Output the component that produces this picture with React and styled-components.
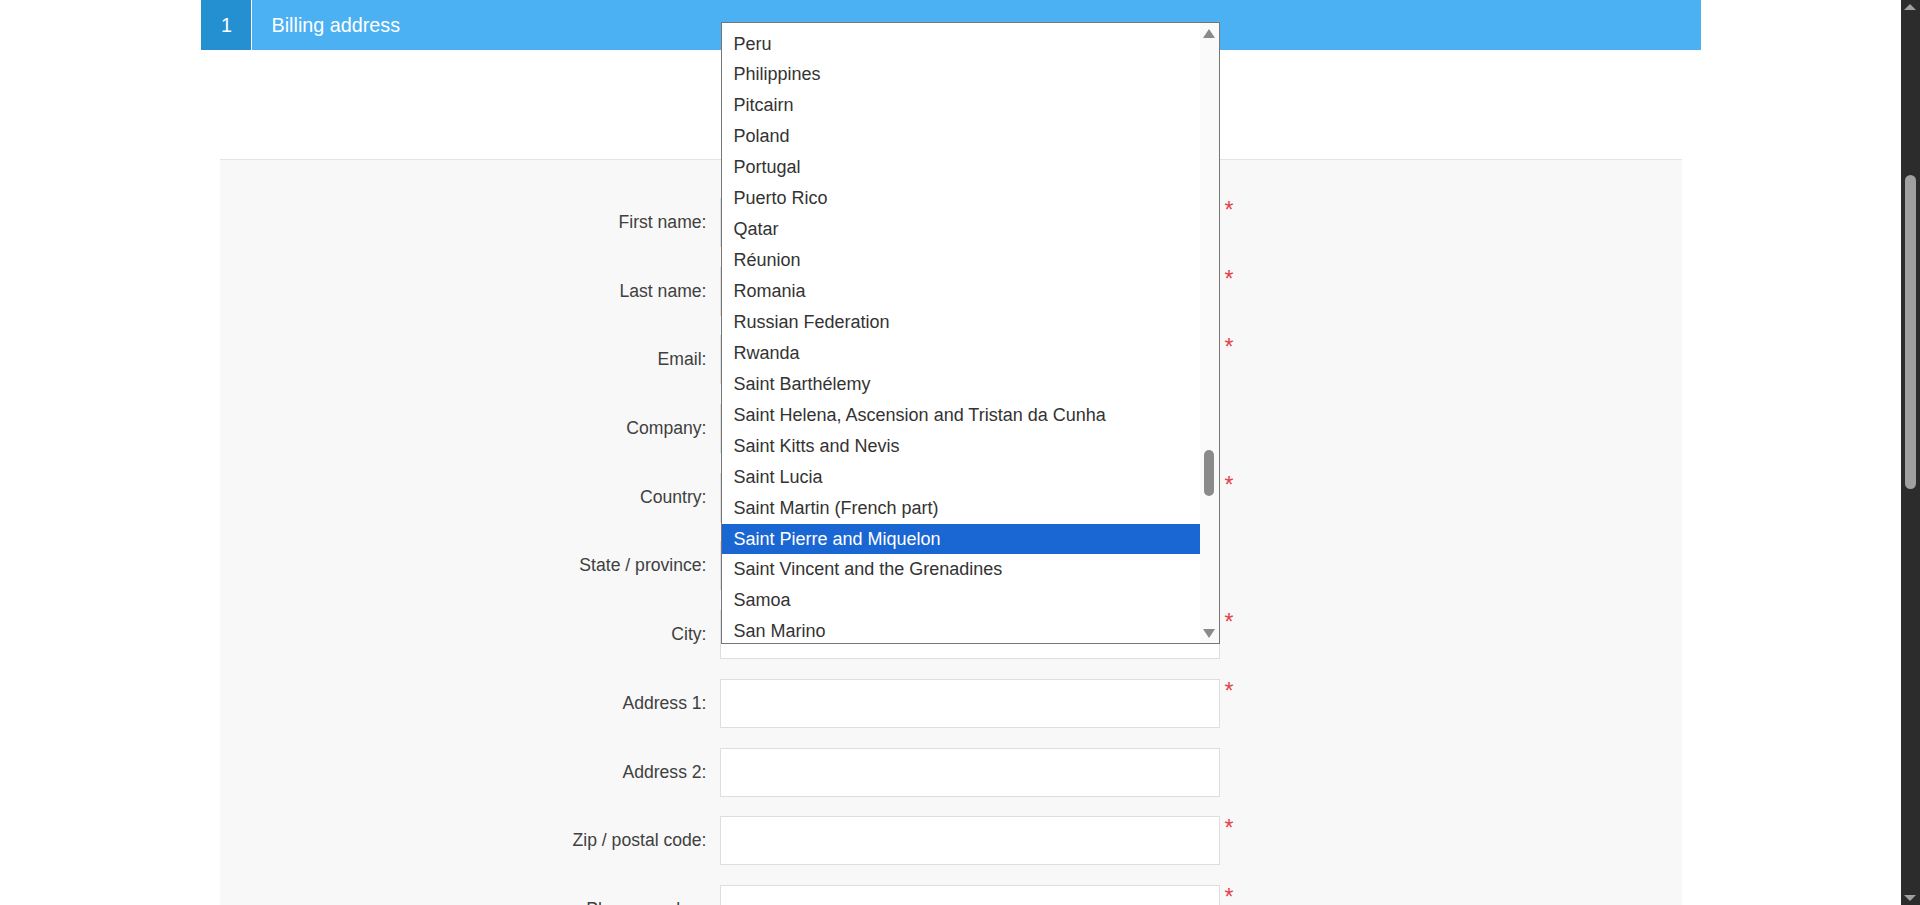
import React from "react";
import styled, { createGlobalStyle } from "styled-components";

const Global = createGlobalStyle`
  html, body { margin: 0; padding: 0; height: 905px; overflow: hidden; background: #fff; }
  body { font-family: "Liberation Sans", Arial, sans-serif; }
  * { box-sizing: border-box; }
`;

const Page = styled.div`
  display: flex;
  width: 1920px;
  height: 905px;
  overflow: hidden;
`;

const Main = styled.div`
  flex: 1;
  height: 905px;
  overflow: hidden;
`;

const Container = styled.div`
  position: relative;
  width: 1500px;
  margin: 0 auto;
`;

const Header = styled.div`
  display: flex;
  height: 50px;
  background: #4bb1f2;
  color: #fff;
  font-size: 19.8px;
`;

const StepNumber = styled.div`
  width: 51px;
  display: flex;
  align-items: center;
  justify-content: center;
  background: #2590d1;
  border-right: 1px solid #fff;
  padding-left: 2px;
`;

const StepTitle = styled.div`
  display: flex;
  align-items: center;
  padding-left: 20px;
`;

const Spacer = styled.div`
  height: 109px;
`;

const Panel = styled.div`
  margin: 0 19px;
  background: #f8f8f8;
  border-top: 1px solid #e4e4e4;
  padding: 38px 0 60px 87px;
  display: flex;
  flex-direction: column;
  gap: 19.7px;
`;

const Row = styled.div`
  display: grid;
  grid-template-columns: 400px 500px 20px;
  column-gap: 13px;
  height: 49px;
`;

const Label = styled.label`
  display: flex;
  align-items: center;
  justify-content: flex-end;
  color: #404040;
  font-size: 17.6px;
`;

const Input = styled.input`
  width: 500px;
  height: 49px;
  border: 1px solid #dedede;
  background: #fff;
  font: inherit;
  font-size: 17.6px;
  padding: 0 12px;
  outline: none;
`;

const Required = styled.span`
  color: #e4434b;
  font-size: 23px;
  line-height: 1;
  margin-left: -8px;
  padding-top: 1px;
`;

const ListBox = styled.div`
  position: absolute;
  left: 520px;
  top: 22px;
  width: 499px;
  height: 622px;
  border: 1px solid #767676;
  background: #fff;
  display: flex;
  overflow: hidden;
`;

const Options = styled.ul`
  list-style: none;
  margin: 0;
  padding: 5.5px 0 0 0;
  width: 478px;
  overflow: hidden;
`;

const Option = styled.li`
  height: 30.95px;
  line-height: 30.95px;
  padding-left: 12px;
  font-size: 18px;
  white-space: nowrap;
  color: ${(p) => (p.$selected ? "#fff" : "#333")};
  background: ${(p) => (p.$selected ? "#1a66d3" : "transparent")};
`;

const Track = styled.div`
  width: 19px;
  background: #fafafa;
  position: relative;
`;

const Arrow = styled.div`
  position: absolute;
  left: 3px;
  width: 0;
  height: 0;
  border-left: 6px solid transparent;
  border-right: 6px solid transparent;
  ${(p) =>
    p.$dir === "up"
      ? `top: 6px; border-bottom: 9px solid #8a8a8a;`
      : `bottom: 5px; border-top: 9px solid #8a8a8a;`}
`;

const Thumb = styled.div`
  position: absolute;
  left: 4px;
  top: 427px;
  width: 10px;
  height: 46px;
  border-radius: 5px;
  background: #8a8a8a;
`;

const PageScrollbar = styled.div`
  width: 19px;
  height: 905px;
  background: #2c2c2c;
  position: relative;
`;

const PageArrow = styled.div`
  position: absolute;
  left: 3px;
  width: 0;
  height: 0;
  border-left: 6.5px solid transparent;
  border-right: 6.5px solid transparent;
  ${(p) =>
    p.$dir === "up"
      ? `top: 4px; border-bottom: 6px solid #a0a0a0;`
      : `bottom: 4px; border-top: 6px solid #a0a0a0;`}
`;

const PageThumb = styled.div`
  position: absolute;
  left: 4px;
  top: 175px;
  width: 11px;
  height: 314px;
  border-radius: 6px;
  background: #a0a0a0;
`;

const fields = [
  ["First name:", true],
  ["Last name:", true],
  ["Email:", true],
  ["Company:", false],
  ["Country:", true],
  ["State / province:", false],
  ["City:", true],
  ["Address 1:", true],
  ["Address 2:", false],
  ["Zip / postal code:", true],
  ["Phone number:", true],
  ["Fax number:", false],
];

const countries = [
  "Peru",
  "Philippines",
  "Pitcairn",
  "Poland",
  "Portugal",
  "Puerto Rico",
  "Qatar",
  "Réunion",
  "Romania",
  "Russian Federation",
  "Rwanda",
  "Saint Barthélemy",
  "Saint Helena, Ascension and Tristan da Cunha",
  "Saint Kitts and Nevis",
  "Saint Lucia",
  "Saint Martin (French part)",
  "Saint Pierre and Miquelon",
  "Saint Vincent and the Grenadines",
  "Samoa",
  "San Marino",
  "Sao Tome and Principe",
];

export default function App() {
  return (
    <>
      <Global />
      <Page>
        <Main>
          <Container>
            <Header>
              <StepNumber>1</StepNumber>
              <StepTitle>Billing address</StepTitle>
            </Header>
            <Spacer />
            <Panel>
              {fields.map(([label, req]) => (
                <Row key={label}>
                  <Label>{label}</Label>
                  <Input type="text" />
                  {req ? <Required>*</Required> : <span />}
                </Row>
              ))}
            </Panel>
            <ListBox>
              <Options>
                {countries.map((c) => (
                  <Option key={c} $selected={c === "Saint Pierre and Miquelon"}>
                    {c}
                  </Option>
                ))}
              </Options>
              <Track>
                <Arrow $dir="up" />
                <Thumb />
                <Arrow $dir="down" />
              </Track>
            </ListBox>
          </Container>
        </Main>
        <PageScrollbar>
          <PageArrow $dir="up" />
          <PageThumb />
          <PageArrow $dir="down" />
        </PageScrollbar>
      </Page>
    </>
  );
}
